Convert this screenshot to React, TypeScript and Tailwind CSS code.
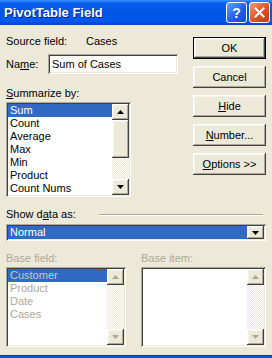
import React from "react";

const raised =
  "shadow-[inset_-1px_-1px_#404040,inset_1px_1px_#ffffff,inset_-2px_-2px_#aca899,inset_2px_2px_#f5f4ea]";
const sunken =
  "shadow-[inset_1px_1px_#aca899,inset_-1px_-1px_#ffffff,inset_2px_2px_#404040,inset_-2px_-2px_#ece9d8]";
const hatch =
  "bg-[repeating-conic-gradient(#ece9d8_0_25%,#ffffff_0_50%)] bg-[length:2px_2px]";

const Arrow = ({ down, dim }: { down?: boolean; dim?: boolean }) => (
  <svg width="7" height="4" viewBox="0 0 7 4" aria-hidden>
    <polygon
      points={down ? "0,0 7,0 3.5,4" : "3.5,0 7,4 0,4"}
      fill={dim ? "#aca899" : "#000"}
    />
  </svg>
);

function ScrollBtn({ down, dim }: { down?: boolean; dim?: boolean }) {
  return (
    <div className={`flex h-[16px] shrink-0 items-center justify-center bg-[#ece9d8] ${raised}`}>
      <Arrow down={down} dim={dim} />
    </div>
  );
}

function ListBox({
  items,
  w,
  h,
  disabled,
  thumb,
}: {
  items: string[];
  w: string;
  h: string;
  disabled?: boolean;
  thumb?: boolean;
}) {
  return (
    <div className={`flex bg-white p-[2px] ${w} ${h} ${sunken}`}>
      <div className="flex-1 overflow-hidden">
        {items.map((t, i) => (
          <div
            key={t}
            className={`h-[13px] px-[2px] leading-[13px] ${
              i === 0 ? "bg-[#316ac5]" : ""
            } ${disabled ? (i === 0 ? "text-[#c9c7ba]" : "text-[#aca899]") : i === 0 ? "text-white" : "text-black"}`}
          >
            {t}
          </div>
        ))}
      </div>
      <div className="flex w-[17px] flex-col">
        <ScrollBtn dim={disabled} />
        {thumb && <div className={`h-[38px] bg-[#ece9d8] ${raised}`} />}
        <div className={`flex-1 ${hatch}`} />
        <ScrollBtn down dim={disabled} />
      </div>
    </div>
  );
}

function Btn({ children, def }: { children: React.ReactNode; def?: boolean }) {
  return (
    <div
      className={`flex h-[22px] items-center justify-center bg-[#ece9d8] ${
        def ? "border border-black" : ""
      } ${raised}`}
    >
      {children}
    </div>
  );
}

export default function App() {
  return (
    <div className="flex h-[358px] w-[272px] flex-col overflow-hidden bg-[#ece9d8] font-['Liberation_Sans',Arial,sans-serif] text-[11px] leading-[13px] text-black">
      {/* title bar */}
      <div className="flex h-[25px] shrink-0 items-center bg-[linear-gradient(#3d95ff_0%,#0a5fef_12%,#0054e3_50%,#0058ee_85%,#0043c9_100%)] pl-[4px] pr-[2px]">
        <span className="font-['Liberation_Sans',Arial,sans-serif] text-[13px] font-bold text-white [text-shadow:1px_1px_#0a1f7a]">
          PivotTable Field
        </span>
        <div className="ml-auto flex gap-[2px]">
          <div className="flex h-[21px] w-[21px] items-center justify-center rounded-[3px] border border-white bg-[linear-gradient(135deg,#6b9cff,#1c5bf0_60%,#1748c8)] text-[14px] font-bold leading-none text-white">
            ?
          </div>
          <div className="flex h-[21px] w-[21px] items-center justify-center rounded-[3px] border border-white bg-[linear-gradient(135deg,#f09a78,#e2502a_55%,#c33a14)]">
            <svg width="11" height="11" viewBox="0 0 11 11" aria-hidden>
              <path d="M1.5 1.5l8 8M9.5 1.5l-8 8" stroke="#fff" strokeWidth="2" strokeLinecap="square" />
            </svg>
          </div>
        </div>
      </div>

      <div className="flex-1 px-[6px] pt-[10px]">
        <div className="flex">
          <div className="w-[172px]">
            <div className="flex h-[13px]">
              <span className="w-[80px]">Source field:</span>
              <span>Cases</span>
            </div>
            <div className="mt-[6px] flex items-center">
              <span className="w-[42px]">
                Na<u>m</u>e:
              </span>
              <div className={`flex h-[20px] w-[130px] items-center bg-white px-[4px] ${sunken}`}>
                Sum of Cases
              </div>
            </div>
            <div className="mt-[13px] h-[13px]">
              <u>S</u>ummarize by:
            </div>
            <div className="mt-[2px]">
              <ListBox
                items={["Sum", "Count", "Average", "Max", "Min", "Product", "Count Nums"]}
                w="w-[125px]"
                h="h-[95px]"
                thumb
              />
            </div>
          </div>
          <div className="ml-auto mt-[2px] flex w-[73px] flex-col gap-[7px]">
            <Btn def>OK</Btn>
            <Btn>Cancel</Btn>
            <Btn>
              <span>
                <u>H</u>ide
              </span>
            </Btn>
            <Btn>
              <span>
                <u>N</u>umber...
              </span>
            </Btn>
            <Btn>
              <span>
                <u>O</u>ptions &gt;&gt;
              </span>
            </Btn>
          </div>
        </div>

        <div className="mt-[11px] flex h-[13px] items-center">
          <span className="w-[93px]">
            Show d<u>a</u>ta as:
          </span>
          <div className="mr-[3px] flex-1 border-t border-b border-t-[#aca899] border-b-white" />
        </div>
        <div className={`mt-[3px] flex h-[17px] bg-white p-[2px] ${sunken}`}>
          <div className="flex flex-1 items-center bg-[#316ac5] px-[2px] text-white">Normal</div>
          <div className={`flex w-[17px] items-center justify-center bg-[#ece9d8] ${raised}`}>
            <Arrow down />
          </div>
        </div>

        <div className="mt-[11px] flex h-[13px] text-[#aca899]">
          <span className="w-[135px]">Base field:</span>
          <span>Base item:</span>
        </div>
        <div className="mt-[2px] flex justify-between">
          <ListBox items={["Customer", "Product", "Date", "Cases"]} w="w-[120px]" h="h-[80px]" disabled />
          <ListBox items={[]} w="w-[125px]" h="h-[80px]" disabled />
        </div>
      </div>
      <div className="h-[3px] shrink-0 bg-[#0054e3] shadow-[inset_0_1px_#0831d9]" />
    </div>
  );
}
